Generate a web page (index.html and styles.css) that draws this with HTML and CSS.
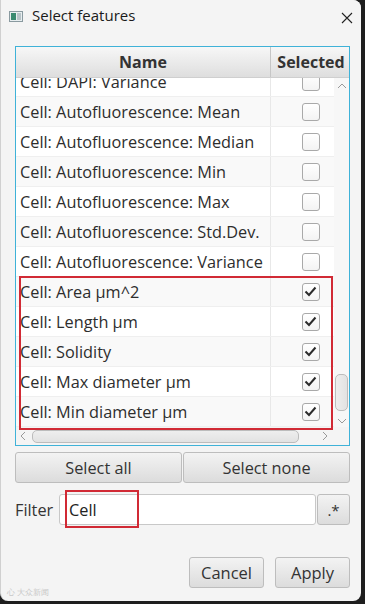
FILE: index.html
```html
<!DOCTYPE html>
<html>
<head>
<meta charset="utf-8">
<link rel="stylesheet" href="styles.css">
</head>
<body>
<div class="dialog">
  <div class="titlebar">
    <svg class="app-icon" width="14" height="11" viewBox="0 0 14 11">
      <rect x="0.5" y="0.5" width="13" height="10" fill="#e8eef0" stroke="#8a9aa0"/>
      <rect x="2" y="2" width="5" height="7" fill="#3a8a70"/>
      <rect x="8" y="2" width="4" height="7" fill="#b8c4c8"/>
    </svg>
    <span class="title">Select features</span>
    <svg class="close" width="12" height="12" viewBox="0 0 12 12">
      <path d="M1 1 L11 11 M11 1 L1 11" stroke="#222" stroke-width="1.1" fill="none"/>
    </svg>
  </div>

  <div class="content">
    <div class="table">
      <div class="thead">
        <div class="th name-col">Name</div>
        <div class="th sel-col">Selected</div>
      </div>
      <div class="tbody-wrap">
        <div class="tbody">
          <div class="rows">
            <div class="row first"><div class="cell">Cell: DAPI: Variance</div><div class="cb-cell"><span class="cb"></span></div></div>
            <div class="row alt"><div class="cell">Cell: Autofluorescence: Mean</div><div class="cb-cell"><span class="cb"></span></div></div>
            <div class="row"><div class="cell">Cell: Autofluorescence: Median</div><div class="cb-cell"><span class="cb"></span></div></div>
            <div class="row alt"><div class="cell">Cell: Autofluorescence: Min</div><div class="cb-cell"><span class="cb"></span></div></div>
            <div class="row"><div class="cell">Cell: Autofluorescence: Max</div><div class="cb-cell"><span class="cb"></span></div></div>
            <div class="row alt"><div class="cell">Cell: Autofluorescence: Std.Dev.</div><div class="cb-cell"><span class="cb"></span></div></div>
            <div class="row"><div class="cell">Cell: Autofluorescence: Variance</div><div class="cb-cell"><span class="cb"></span></div></div>
            <div class="row alt"><div class="cell">Cell: Area µm^2</div><div class="cb-cell"><span class="cb checked"><svg width="13" height="11" viewBox="0 0 13 11"><path d="M1.5 5.5 L5 9 L11.5 1.5" stroke="#2b2b2b" stroke-width="2" fill="none"/></svg></span></div></div>
            <div class="row"><div class="cell">Cell: Length µm</div><div class="cb-cell"><span class="cb checked"><svg width="13" height="11" viewBox="0 0 13 11"><path d="M1.5 5.5 L5 9 L11.5 1.5" stroke="#2b2b2b" stroke-width="2" fill="none"/></svg></span></div></div>
            <div class="row alt"><div class="cell">Cell: Solidity</div><div class="cb-cell"><span class="cb checked"><svg width="13" height="11" viewBox="0 0 13 11"><path d="M1.5 5.5 L5 9 L11.5 1.5" stroke="#2b2b2b" stroke-width="2" fill="none"/></svg></span></div></div>
            <div class="row"><div class="cell">Cell: Max diameter µm</div><div class="cb-cell"><span class="cb checked"><svg width="13" height="11" viewBox="0 0 13 11"><path d="M1.5 5.5 L5 9 L11.5 1.5" stroke="#2b2b2b" stroke-width="2" fill="none"/></svg></span></div></div>
            <div class="row alt"><div class="cell">Cell: Min diameter µm</div><div class="cb-cell"><span class="cb checked"><svg width="13" height="11" viewBox="0 0 13 11"><path d="M1.5 5.5 L5 9 L11.5 1.5" stroke="#2b2b2b" stroke-width="2" fill="none"/></svg></span></div></div>
          </div>
          <div class="vscroll">
            <svg class="arrow" width="10" height="6" viewBox="0 0 10 6"><path d="M1 5 L5 1 L9 5" stroke="#999" stroke-width="1" fill="none"/></svg>
            <div class="vtrack"><div class="vthumb"></div></div>
            <svg class="arrow" width="10" height="6" viewBox="0 0 10 6"><path d="M1 1 L5 5 L9 1" stroke="#999" stroke-width="1" fill="none"/></svg>
          </div>
        </div>
        <div class="hscroll">
          <svg class="harrow" width="6" height="10" viewBox="0 0 6 10"><path d="M5 1 L1 5 L5 9" stroke="#999" stroke-width="1" fill="none"/></svg>
          <div class="hthumb"></div>
          <svg class="harrow right" width="6" height="10" viewBox="0 0 6 10"><path d="M1 1 L5 5 L1 9" stroke="#999" stroke-width="1" fill="none"/></svg>
          <div class="corner"></div>
        </div>
        <div class="mark mark-rows"></div>
      </div>
    </div>

    <div class="sel-buttons">
      <button class="btn">Select all</button>
      <button class="btn">Select none</button>
    </div>

    <div class="filter-row">
      <span class="filter-label">Filter</span>
      <div class="input-wrap">
        <div class="input">Cell</div>
        <div class="mark mark-input"></div>
      </div>
      <button class="btn regex">.*</button>
    </div>

    <div class="footer">
      <button class="btn foot">Cancel</button>
      <button class="btn foot">Apply</button>
    </div>
  </div>
  <div class="watermark">心 大众新闻</div>
</div>
</body>
</html>
```

FILE: styles.css
```css
* { box-sizing: border-box; }
html, body {
  margin: 0;
  padding: 0;
  background: #1e1e1e;
  width: 365px;
  height: 604px;
  overflow: hidden;
  font-family: "Open Sans", "Noto Sans", sans-serif;
  color: #333;
}
.dialog {
  position: relative;
  width: 361px;
  height: 601px;
  background: #f4f4f4;
  border-radius: 0 8px 8px 8px;
  display: flex;
  flex-direction: column;
  border-left: 1px solid #d0d0d0;
}
.titlebar {
  height: 46px;
  display: flex;
  align-items: flex-start;
  padding: 10px 8px 0 8px;
  background: #f4f4f4;
  border-radius: 0 8px 0 0;
}
.app-icon { margin-top: 1px; }
.title {
  font-size: 15px;
  color: #1a1a1a;
  margin-left: 9px;
  line-height: 16px;
  margin-top: -3px;
  flex: 1;
}
.close { margin-top: 2px; margin-right: 0; }

.content {
  padding: 0 11px 0 14px;
  display: flex;
  flex-direction: column;
  flex: 1;
}
.table {
  border: 1px solid #3fb2d8;
  background: #fff;
  height: 400px;
  display: flex;
  flex-direction: column;
}
.thead {
  display: flex;
  height: 31px;
  background: linear-gradient(#f7f7f7, #dedede);
  border-bottom: 1px solid #cfcfcf;
}
.th {
  font-weight: 700;
  font-size: 16px;
  color: #333;
  display: flex;
  align-items: center;
  justify-content: center;
}
.th.name-col {
  width: 255px;
  border-right: 1px solid #c6c6c6;
}
.th.sel-col { flex: 1; padding-left: 2px; }
.tbody-wrap {
  position: relative;
  flex: 1;
  display: flex;
  flex-direction: column;
}
.tbody {
  flex: 1;
  display: flex;
  overflow: hidden;
}
.rows {
  flex: 1;
  overflow: hidden;
}
.row {
  height: 30px;
  display: flex;
  background: #fff;
  border-bottom: 1px solid #efefef;
}
.row.first { margin-top: -11px; }
.row.alt { background: #f9f9f9; }
.cell {
  width: 255px;
  border-right: 1px solid #e8e8e8;
  font-size: 16.3px;
  color: #2d2d2d;
  padding-left: 4px;
  display: flex;
  align-items: center;
  white-space: nowrap;
}
.cb-cell {
  flex: 1;
  display: flex;
  align-items: center;
  justify-content: center;
  padding-left: 16px;
}
.cb {
  width: 18px;
  height: 18px;
  border: 1px solid #a9a9a9;
  border-radius: 3px;
  background: linear-gradient(#ffffff, #f3f3f3);
  display: flex;
  align-items: center;
  justify-content: center;
}
.vscroll {
  width: 15px;
  background: #f7f7f7;
  display: flex;
  flex-direction: column;
  align-items: center;
  padding: 5px 0 3px;
}
.vtrack {
  flex: 1;
  width: 100%;
  display: flex;
  flex-direction: column;
  justify-content: flex-end;
  padding: 0 1px 7px;
}
.vthumb {
  height: 37px;
  background: linear-gradient(90deg, #eeeeee, #e2e2e2);
  border: 1px solid #bcbcbc;
  border-radius: 5px;
}
.hscroll {
  height: 18px;
  background: #f4f4f4;
  display: flex;
  align-items: center;
  padding-left: 4px;
}
.harrow { flex: none; }
.hthumb {
  margin-left: 6px;
  width: 267px;
  height: 13px;
  background: linear-gradient(#eeeeee, #e2e2e2);
  border: 1px solid #bcbcbc;
  border-radius: 5px;
}
.harrow.right { margin-left: 23px; }
.corner { flex: 1; }

.mark {
  position: absolute;
  border: 2px solid #d12a35;
  pointer-events: none;
}
.mark-rows {
  left: 3px;
  top: 198px;
  width: 314px;
  height: 154px;
}

.sel-buttons {
  display: flex;
  gap: 1px;
  margin-top: 6px;
}
.btn {
  font-family: "Open Sans", "Noto Sans", sans-serif;
  font-size: 16.3px;
  color: #333;
  background: linear-gradient(#f3f3f3, #dcdcdc);
  border: 1px solid #bdbdbd;
  border-radius: 3px;
  height: 31px;
  padding: 0;
}
.sel-buttons .btn { flex: 1; }

.filter-row {
  display: flex;
  align-items: center;
  margin-top: 11px;
  height: 31px;
}
.filter-label {
  font-size: 16.3px;
  width: 44px;
  color: #333;
}
.input-wrap {
  position: relative;
  flex: 1;
  height: 31px;
}
.input {
  height: 31px;
  background: #fff;
  border: 1px solid #c8c8c8;
  border-radius: 3px;
  font-size: 16.3px;
  color: #222;
  padding-left: 9px;
  display: flex;
  align-items: center;
}
.mark-input {
  left: 6px;
  top: -4px;
  width: 74px;
  height: 38px;
}
.btn.regex {
  width: 33px;
  margin-left: 1px;
  font-size: 15px;
}

.footer {
  display: flex;
  justify-content: flex-end;
  gap: 11px;
  margin-top: 32px;
}
.btn.foot {
  width: 75px;
  height: 31px;
  font-size: 16.5px;
}
.watermark {
  position: absolute;
  left: 6px;
  bottom: 3px;
  font-size: 8px;
  color: #c8c8c8;
}
```
